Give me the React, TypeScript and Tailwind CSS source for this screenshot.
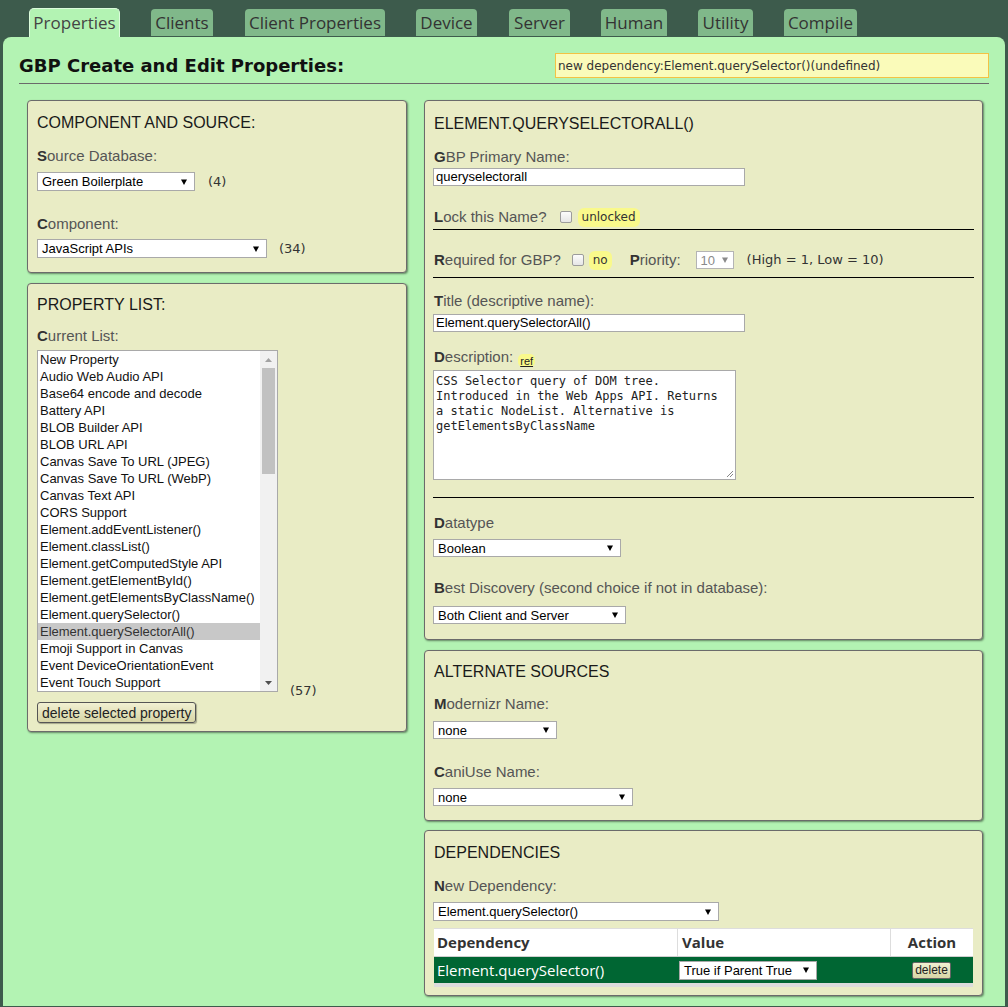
import React from "react";

const LS = "font-['Liberation_Sans',Arial,sans-serif]";
const DV = "font-['DejaVu_Sans',Verdana,sans-serif]";
const OS = "font-['Open_Sans',sans-serif]";
const MONO = "font-['DejaVu_Sans_Mono',monospace]";

const CARD =
  "rounded-[4px] border border-[#6b6b6b] bg-[#e9ecc5] shadow-[1px_1px_2px_rgba(0,0,0,0.45)] px-[9px]";
const HEAD = "font-['Liberation_Sans',Arial,sans-serif] text-[16px] leading-[20px] text-[#1a1a1a]";

function LabelText({ text }: { text: string }) {
  return (
    <>
      <span className="font-bold text-[#333]">{text[0]}</span>
      {text.slice(1)}
    </>
  );
}

function Label({ text, className = "" }: { text: string; className?: string }) {
  return (
    <div className={`${LS} text-[15px] leading-[18px] text-[#555] ${className}`}>
      <LabelText text={text} />
    </div>
  );
}

function Arrow({ color = "#000" }: { color?: string }) {
  return (
    <svg width="6" height="6" viewBox="0 0 6 6" className="shrink-0">
      <path d="M0 0.5H6L3 6Z" fill={color} />
    </svg>
  );
}

function Select({ className = "", text, gray = false }: { className?: string; text: string; gray?: boolean }) {
  return (
    <div
      className={`flex items-center justify-between border bg-white pl-[4px] pr-[7px] text-[13px] leading-[15px] ${LS} ${
        gray ? "border-[#b4b4b4] text-[#8a8a8a]" : "border-[#a9a9a9] text-black"
      } ${className}`}
    >
      <span className="whitespace-nowrap">{text}</span>
      <Arrow color={gray ? "#8a8a8a" : "#000"} />
    </div>
  );
}

function Count({ children, className = "" }: { children: React.ReactNode; className?: string }) {
  return <span className={`${DV} text-[13px] leading-[16px] text-[#333] ${className}`}>{children}</span>;
}

function Pill({ children, className = "" }: { children: React.ReactNode; className?: string }) {
  return (
    <span
      className={`flex h-[19px] items-center rounded-[6px] bg-[#f9f98b] px-[4px] ${DV} text-[12px] leading-[14px] text-[#333] ${className}`}
    >
      {children}
    </span>
  );
}

function Checkbox({ className = "" }: { className?: string }) {
  return (
    <span
      className={`block h-[12px] w-[12px] shrink-0 rounded-[2px] border border-[#9c9c9c] bg-gradient-to-b from-[#fcfcfc] to-[#e6e6e6] ${className}`}
    />
  );
}

function Rule() {
  return <div className="-mx-[1px] h-px bg-black" />;
}

const TABS: { label: string; w: string }[] = [
  { label: "Properties", w: "w-[91px]" },
  { label: "Clients", w: "w-[62px]" },
  { label: "Client Properties", w: "w-[140px] ml-[1px]" },
  { label: "Device", w: "w-[61px]" },
  { label: "Server", w: "w-[61px] ml-[1px]" },
  { label: "Human", w: "w-[66px]" },
  { label: "Utility", w: "w-[55px]" },
  { label: "Compile", w: "w-[73px]" },
];

const ITEMS = [
  "New Property",
  "Audio Web Audio API",
  "Base64 encode and decode",
  "Battery API",
  "BLOB Builder API",
  "BLOB URL API",
  "Canvas Save To URL (JPEG)",
  "Canvas Save To URL (WebP)",
  "Canvas Text API",
  "CORS Support",
  "Element.addEventListener()",
  "Element.classList()",
  "Element.getComputedStyle API",
  "Element.getElementById()",
  "Element.getElementsByClassName()",
  "Element.querySelector()",
  "Element.querySelectorAll()",
  "Emoji Support in Canvas",
  "Event DeviceOrientationEvent",
  "Event Touch Support",
];

function ListBox() {
  return (
    <div className="flex h-[342px] w-[241px] border border-[#a9a9a9] bg-white">
      <div className="flex-1 overflow-hidden">
        {ITEMS.map((it, i) => (
          <div
            key={it}
            className={`h-[17px] whitespace-nowrap pl-[2px] ${LS} text-[13px] leading-[17px] ${
              i === 16 ? "bg-[#c8c8c8] text-[#333]" : "text-[#111]"
            }`}
          >
            {it}
          </div>
        ))}
      </div>
      <div className="flex w-[17px] flex-col bg-[#f1f1f1]">
        <div className="flex h-[17px] items-center justify-center">
          <svg width="7" height="4" viewBox="0 0 7 4">
            <path d="M0 4L3.5 0L7 4Z" fill="#a3a3a3" />
          </svg>
        </div>
        <div className="flex-1">
          <div className="mx-[2px] h-[106px] bg-[#c1c1c1]" />
        </div>
        <div className="flex h-[17px] items-center justify-center">
          <svg width="7" height="4" viewBox="0 0 7 4">
            <path d="M0 0L3.5 4L7 0Z" fill="#505050" />
          </svg>
        </div>
      </div>
    </div>
  );
}

export default function App() {
  return (
    <div className={`min-h-[1007px] bg-[#3d5b4c] ${LS}`}>
      {/* Tabs */}
      <div className="flex items-end gap-[31px] pl-[29px] pt-[8px]">
        {TABS.map((t, i) =>
          i === 0 ? (
            <div
              key={t.label}
              className={`flex h-[29px] items-center justify-center rounded-t-[5px] border border-b-0 border-[#dcfcdc] bg-[#b3f3b3] ${t.w} ${OS} text-[17px] leading-[20px] text-[#444]`}
            >
              {t.label}
            </div>
          ) : (
            <div
              key={t.label}
              className={`mb-[1px] flex h-[27px] items-center justify-center rounded-t-[4px] bg-[#80b88a] ${t.w} ${OS} text-[17px] leading-[20px] text-[#333]`}
            >
              {t.label}
            </div>
          )
        )}
      </div>

      {/* Main panel */}
      <div className="mx-[3px] rounded-t-[8px] bg-[#b3f3b3] px-[16px] pb-[10px] pt-[16px]">
        <div className="flex h-[25px] items-center justify-between">
          <div className={`${DV} text-[18px] font-bold leading-[21px] text-[#111]`}>GBP Create and Edit Properties:</div>
          <div
            className={`flex h-[25px] w-[434px] items-center border border-[#f3c244] bg-[#fafbba] px-[2px] ${DV} text-[12px] text-[#333]`}
          >
            new dependency:Element.querySelector()(undefined)
          </div>
        </div>
        <div className="mt-[5px] h-px bg-[#6a6a6a]" />

        <div className="mt-[16px] flex items-start gap-[17px] pl-[8px] pr-[6px]">
          {/* Left column */}
          <div className="flex w-[380px] flex-col gap-[10px]">
            <div className={`${CARD} pb-[14px] pt-[12px]`}>
              <div className={HEAD}>COMPONENT AND SOURCE:</div>
              <Label text="Source Database:" className="mt-[14px]" />
              <div className="mt-[7px] flex items-center gap-[13px]">
                <Select text="Green Boilerplate" className="h-[19px] w-[158px]" />
                <Count>(4)</Count>
              </div>
              <Label text="Component:" className="mt-[24px]" />
              <div className="mt-[6px] flex items-center gap-[12px]">
                <Select text="JavaScript APIs" className="h-[19px] w-[230px]" />
                <Count>(34)</Count>
              </div>
            </div>

            <div className={`${CARD} pb-[8px] pt-[11px]`}>
              <div className={HEAD}>PROPERTY LIST:</div>
              <Label text="Current List:" className="mt-[12px]" />
              <div className="mt-[5px] flex items-end gap-[12px]">
                <ListBox />
                <Count className="mb-[-7px]">(57)</Count>
              </div>
              <button
                className={`mt-[10px] flex h-[21px] items-center rounded-[3px] border border-[#555] bg-gradient-to-b from-[#f1f0d2] to-[#d7d5a6] px-[4px] ${LS} text-[14px] leading-[16px] text-[#222] shadow-[1px_1px_1px_rgba(0,0,0,0.3)]`}
              >
                delete selected property
              </button>
            </div>
          </div>

          {/* Right column */}
          <div className="flex flex-1 flex-col">
            <div className={`${CARD} pb-[15px] pt-[13px]`}>
              <div className={HEAD}>ELEMENT.QUERYSELECTORALL()</div>
              <Label text="GBP Primary Name:" className="mt-[14px]" />
              <div
                className={`ml-[-1px] mt-[2px] flex h-[18px] w-[312px] items-center border border-[#a9a9a9] bg-white pl-[2px] ${LS} text-[13px] text-black`}
              >
                queryselectorall
              </div>
              <div className={`mt-[21px] flex h-[20px] items-center ${LS} text-[15px] leading-[18px] text-[#555]`}>
                <span>
                  <LabelText text="Lock this Name?" />
                </span>
                <Checkbox className="ml-[13px]" />
                <Pill className="ml-[6px]">unlocked</Pill>
              </div>
              <div className="mt-[2px]">
                <Rule />
              </div>
              <div className={`mt-[20px] flex h-[20px] items-center ${LS} text-[15px] leading-[18px] text-[#555]`}>
                <span>
                  <LabelText text="Required for GBP?" />
                </span>
                <Checkbox className="ml-[11px]" />
                <Pill className="ml-[5px]">no</Pill>
                <span className="ml-[18px]">
                  <LabelText text="Priority:" />
                </span>
                <Select text="10" gray className="ml-[15px] h-[18px] w-[38px] !pr-[5px]" />
                <Count className="ml-[13px]">(High = 1, Low = 10)</Count>
              </div>
              <div className="mt-[7px]">
                <Rule />
              </div>
              <Label text="Title (descriptive name):" className="mt-[14px]" />
              <div
                className={`ml-[-1px] mt-[4px] flex h-[18px] w-[312px] items-center border border-[#a9a9a9] bg-white pl-[2px] ${LS} text-[13px] text-black`}
              >
                Element.querySelectorAll()
              </div>
              <div className={`mt-[16px] flex items-end ${LS} text-[15px] leading-[18px] text-[#555]`}>
                <span>
                  <LabelText text="Description:" />
                </span>
                <span
                  className={`mb-[-1px] ml-[5px] flex h-[13px] items-center rounded-[5px] bg-[#f9f98b] px-[2px] ${LS} text-[11px] leading-[12px] text-[#222] underline`}
                >
                  ref
                </span>
              </div>
              <div
                className={`relative ml-[-1px] mt-[4px] h-[110px] w-[303px] border border-[#a9a9a9] bg-white px-[2px] pt-[3px] ${MONO} text-[12px] leading-[15px] text-[#222]`}
              >
                <div className="whitespace-pre">CSS Selector query of DOM tree.</div>
                <div className="whitespace-pre">Introduced in the Web Apps API. Returns</div>
                <div className="whitespace-pre">a static NodeList. Alternative is</div>
                <div className="whitespace-pre">getElementsByClassName</div>
                <svg width="8" height="8" viewBox="0 0 8 8" className="absolute bottom-[1px] right-[1px]">
                  <path d="M7 1L1 7M7 4L4 7" stroke="#888" strokeWidth="1" />
                </svg>
              </div>
              <div className="mt-[17px]">
                <Rule />
              </div>
              <Label text="Datatype" className="mt-[16px]" />
              <Select text="Boolean" className="ml-[-1px] mt-[7px] h-[18px] w-[188px]" />
              <Label text="Best Discovery (second choice if not in database):" className="mt-[22px]" />
              <Select text="Both Client and Server" className="ml-[-1px] mt-[9px] h-[18px] w-[193px]" />
            </div>

            <div className={`${CARD} mt-[10px] pb-[14px] pt-[11px]`}>
              <div className={HEAD}>ALTERNATE SOURCES</div>
              <Label text="Modernizr Name:" className="mt-[13px]" />
              <Select text="none" className="ml-[-1px] mt-[8px] h-[18px] w-[124px]" />
              <Label text="CaniUse Name:" className="mt-[24px]" />
              <Select text="none" className="ml-[-1px] mt-[7px] h-[18px] w-[200px]" />
            </div>

            <div className={`${CARD} mt-[9px] pb-[8px] pt-[12px]`}>
              <div className={HEAD}>DEPENDENCIES</div>
              <Label text="New Dependency:" className="mt-[14px]" />
              <Select text="Element.querySelector()" className="ml-[-1px] mt-[7px] h-[19px] w-[286px]" />
              <div className="mt-[7px] border-t border-[#ddd]">
                <div className={`grid h-[27px] grid-cols-[243px_213px_1fr] bg-white ${OS} text-[15px] font-bold text-[#333]`}>
                  <div className="flex items-center pl-[3px]">Dependency</div>
                  <div className="flex items-center border-l border-[#ddd] pl-[4px]">Value</div>
                  <div className="flex items-center justify-center border-l border-[#ddd]">Action</div>
                </div>
                <div className={`grid h-[27px] grid-cols-[243px_213px_1fr] border-t border-[#cfcfcf] bg-[#006633] ${OS} text-[15px] text-white`}>
                  <div className="flex items-center pl-[3px]">Element.querySelector()</div>
                  <div className="flex items-center pl-[2px]">
                    <Select text="True if Parent True" className="h-[19px] w-[138px]" />
                  </div>
                  <div className="flex items-center justify-center">
                    <button
                      className={`flex h-[17px] w-[39px] items-center justify-center rounded-[2px] border border-[#666] bg-gradient-to-b from-[#f1f0d2] to-[#d7d5a6] ${LS} text-[12px] leading-[14px] text-[#222]`}
                    >
                      delete
                    </button>
                  </div>
                </div>
                <div className="h-[4px] bg-[#dcdcdc]" />
              </div>
            </div>
          </div>
        </div>
      </div>
    </div>
  );
}
